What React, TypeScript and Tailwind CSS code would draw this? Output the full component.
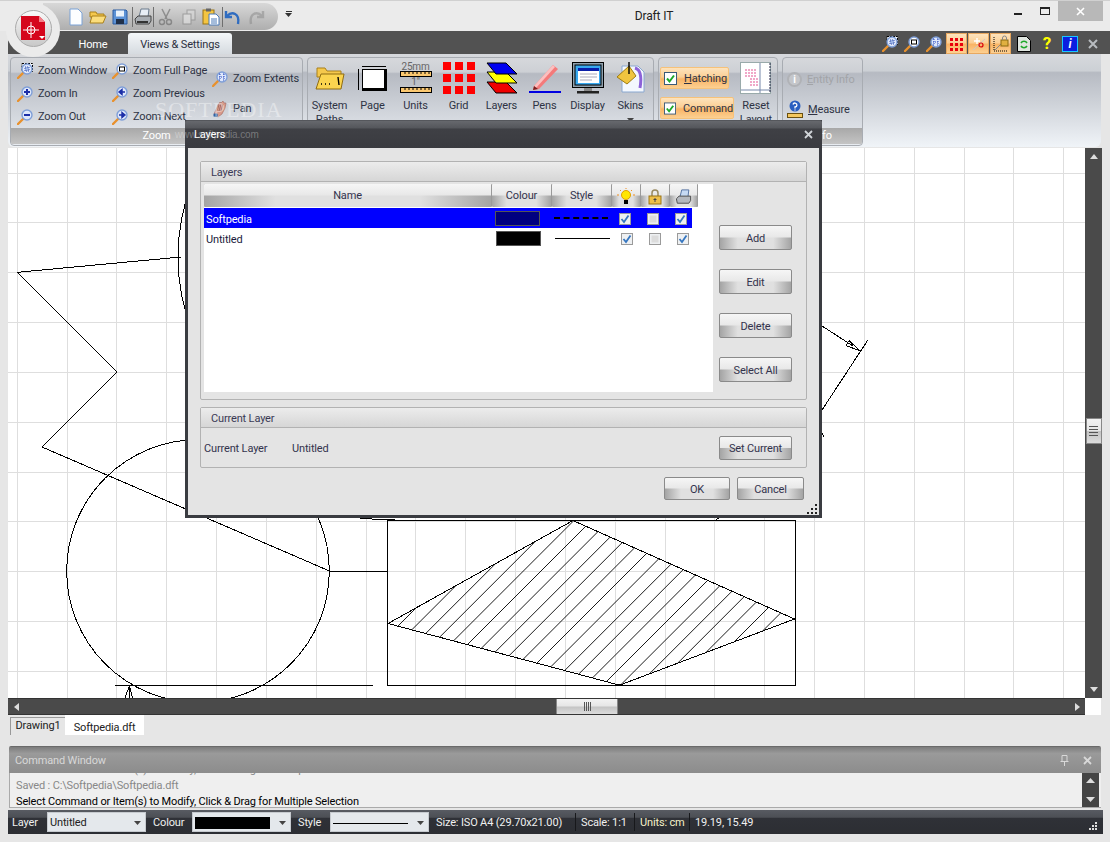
import type { ReactNode } from "react";

// shared backgrounds
const btnBg =
  "bg-[linear-gradient(to_bottom,#f6f6f6,#e8e8e8_48%,transparent_52%),linear-gradient(to_right,#a4a4a4,#e0e0e0_25%,#e0e0e0_75%,#a4a4a4)]";
const orangeBg = "bg-[linear-gradient(to_bottom,#fde3bd,#fbcf95_45%,#f9b465_55%,#fcd092)]";
const groupHeadBg = "bg-[linear-gradient(to_bottom,#ececec,#d6d6d6)]";

function Mag({ kind, size = 16 }: { kind: string; size?: number }) {
  return (
    <svg width={size} height={size} viewBox="0 0 16 16">
      {kind === "window" && <rect x="5" y="0.5" width="10.5" height="8" fill="#fff" stroke="#000" strokeDasharray="2 1" />}
      <line x1="1" y1="15" x2="6" y2="10" stroke="#e8912d" strokeWidth="2.4" strokeLinecap="round" />
      <circle cx="10" cy="6" r="5" fill={kind === "page" ? "#fff" : "#dfe8fb"} stroke="#7f9fd8" strokeWidth="1.4" />
      {kind === "in" && <path d="M7 6h6M10 3v6" stroke="#1c2fa8" strokeWidth="2" />}
      {kind === "out" && <path d="M7 6h6" stroke="#1c2fa8" strokeWidth="2" />}
      {kind === "prev" && <path d="M13 6H9M10 3.5 7 6l3 2.5z" stroke="#1c2fa8" strokeWidth="1.4" fill="#1c2fa8" />}
      {kind === "next" && <path d="M7 6h4M10 3.5 13 6l-3 2.5z" stroke="#1c2fa8" strokeWidth="1.4" fill="#1c2fa8" />}
      {kind === "page" && <rect x="7.5" y="4" width="5" height="4" fill="#fff" stroke="#000" />}
      {kind === "window" && <path d="M8 4h4v4H8z" fill="#9db6e8" stroke="#3a55b0" strokeDasharray="1 1" />}
      {kind === "extents" && <path d="M7 3h2M11 3h2M7 6h6M7 9h2M11 9h2M8 3v6M12 3v6" stroke="#2c4cc0" strokeDasharray="1 1" />}
    </svg>
  );
}

function Pan() {
  return (
    <svg width="16" height="18" viewBox="0 0 16 18">
      <path d="M2 14 6 5l2-3 1 1 2-2 1 2 2 0-1 5-3 6-4 3z" fill="#d99a8c" stroke="#a06a60" strokeWidth="0.6" />
      <path d="M7 5 5 11M9 4 7 11M11 4 9 11" stroke="#8d5a52" strokeWidth="0.7" />
      <rect x="1.5" y="13.5" width="4.5" height="3.5" rx="1" fill="#35609c" />
    </svg>
  );
}

function Caret({ color = "#444" }: { color?: string }) {
  return (
    <svg width="7" height="4" viewBox="0 0 7 4">
      <path d="M0 0h7L3.5 4z" fill={color} />
    </svg>
  );
}

function QatIcon({ name }: { name: string }) {
  const dim = name === "cut" || name === "copy" || name === "redo";
  return (
    <svg width="18" height="18" viewBox="0 0 18 18" className={dim ? "opacity-50" : ""}>
      {name === "new" && <path d="M3 1h8l4 4v12H3z" fill="#fdfeff" stroke="#7ba2d6" />}
      {name === "open" && (
        <>
          <path d="M1 4h6l1 2h7v3H1z" fill="#f5c84c" stroke="#a9801a" />
          <path d="M1 15 3 8h14l-3 7z" fill="#fbdd7c" stroke="#a9801a" />
        </>
      )}
      {name === "save" && (
        <>
          <path d="M2 2h13l1 1v13H2z" fill="#5c92d6" stroke="#2a5ba0" />
          <rect x="5" y="2.5" width="8" height="6" fill="#eaf2fb" />
          <rect x="5" y="11" width="8" height="5" fill="#20304a" />
        </>
      )}
      {name === "print" && (
        <>
          <path d="M5 9 7 1h8l-1 8z" fill="#e8eef6" stroke="#6a7a8c" />
          <path d="M1 11l3-3h13v5l-2 3H2z" fill="#a8adb3" stroke="#444" />
          <path d="M3 14h11" stroke="#333" strokeWidth="2" />
        </>
      )}
      {name === "cut" && (
        <>
          <path d="M5 1l5 10M13 1 8 11" stroke="#555" strokeWidth="1.5" />
          <circle cx="5" cy="14" r="2.5" fill="none" stroke="#555" strokeWidth="1.4" />
          <circle cx="12" cy="14" r="2.5" fill="none" stroke="#555" strokeWidth="1.4" />
        </>
      )}
      {name === "copy" && (
        <>
          <rect x="7" y="2" width="8" height="10" fill="#ddd" stroke="#777" />
          <rect x="3" y="6" width="8" height="10" fill="#eee" stroke="#777" />
        </>
      )}
      {name === "paste" && (
        <>
          <rect x="1" y="2" width="11" height="14" fill="#f4c542" stroke="#9a7414" />
          <rect x="4" y="0.5" width="5" height="3" fill="#666" />
          <path d="M7 6h7l3 3v8H7z" fill="#fff" stroke="#4a7ab8" />
          <path d="M9 11h6M9 13h6M9 15h6" stroke="#4a7ab8" />
        </>
      )}
      {name === "undo" && <path d="M2 3v6h6M3 8c5-5 13-3 11 8" fill="none" stroke="#2f6cc0" strokeWidth="2.4" />}
      {name === "redo" && <path d="M16 3v6h-6M15 8C10 3 2 5 4 16" fill="none" stroke="#888" strokeWidth="2.4" />}
    </svg>
  );
}

function QuickBar() {
  const sep = <span className="mx-[1px] h-[20px] w-px bg-[#6f6f6f]" />;
  return (
    <div className="ml-[43px] mt-[2px] flex h-[27px] w-[235px] items-center rounded-r-[14px] bg-[linear-gradient(to_bottom,#d8d8d8,#aeaeae)] pl-[22px]">
      <div className="flex w-[22px] justify-center"><QatIcon name="new" /></div>
      <div className="flex w-[22px] justify-center"><QatIcon name="open" /></div>
      <div className="flex w-[22px] justify-center"><QatIcon name="save" /></div>
      {sep}
      <div className="flex w-[18px] justify-center"><QatIcon name="print" /></div>
      {sep}
      <div className="flex w-[22px] justify-center"><QatIcon name="cut" /></div>
      <div className="flex w-[24px] justify-center"><QatIcon name="copy" /></div>
      <div className="flex w-[20px] justify-center"><QatIcon name="paste" /></div>
      {sep}
      <div className="flex w-[18px] justify-center"><QatIcon name="undo" /></div>
      <div className="ml-[3px] flex w-[22px] justify-center"><QatIcon name="redo" /></div>
    </div>
  );
}

function TitleBar() {
  return (
    <div className="relative flex h-[31px] items-start border-t border-[#d0d0d0] bg-[#ebebeb]">
      <QuickBar />
      <div className="ml-[7px] mt-[10px] flex flex-col items-center gap-[1px]">
        <span className="h-[1px] w-[6px] bg-[#333]" />
        <Caret color="#333" />
      </div>
      <div className="absolute left-[624px] top-[7px] w-[60px] text-center text-[12px] leading-[16px] text-[#222]">Draft IT</div>
      <div className="ml-auto mr-[7px] flex h-[20px] items-center">
        <span className="mt-[5px] h-[2px] w-[8px] bg-[#222]" />
        <span className="ml-[18px] h-[8px] w-[10px] border border-t-[2px] border-[#222]" />
        <div className="ml-[8px] flex h-[20px] w-[45px] items-center justify-center bg-[#b8b8b8]">
          <svg width="9" height="9" viewBox="0 0 9 9">
            <path d="M1 1l7 7M8 1 1 8" stroke="#fff" strokeWidth="1.6" />
          </svg>
        </div>
      </div>
    </div>
  );
}

function Logo() {
  return (
    <div className="absolute left-[6px] top-[3px] flex h-[54px] w-[54px] items-center justify-center rounded-full bg-[#ebebeb] pb-[4px]">
      <div className="flex h-[37px] w-[37px] items-center justify-center rounded-full border border-[#aaa] bg-[linear-gradient(to_bottom,#fafafa,#c8c8c8)]">
        <svg width="25" height="25" viewBox="0 0 25 25">
          <path d="M0 0h18l6 6v18H0z" fill="#d5061c" />
          <path d="M18 0l6 6h-6z" fill="#f37f87" />
          <circle cx="10" cy="14" r="4" fill="none" stroke="#fff" />
          <path d="M2 14h16M10 6v16" stroke="#fff" />
          <path d="M18 20h6l-3 3z" fill="#fff" />
        </svg>
      </div>
    </div>
  );
}

function RightTools() {
  const onCell = `flex h-[21px] w-[21px] items-center justify-center border border-[#e8a860] ${orangeBg}`;
  return (
    <div className="ml-auto mr-[11px] flex items-center">
      <div className="flex w-[22px] justify-center"><Mag kind="window" /></div>
      <div className="flex w-[22px] justify-center"><Mag kind="page" /></div>
      <div className="mr-[1px] flex w-[22px] justify-center"><Mag kind="extents" /></div>
      <div className={onCell}>
        <svg width="14" height="14" viewBox="0 0 14 14">
          <path d="M0 1h3v3H0zM5 1h3v3H5zM10 1h3v3h-3zM0 6h3v3H0zM5 6h3v3H5zM10 6h3v3h-3zM0 11h3v3H0zM5 11h3v3H5zM10 11h3v3h-3z" fill="#e9000c" />
        </svg>
      </div>
      <div className={`ml-[1px] ${onCell}`}>
        <svg width="14" height="14" viewBox="0 0 14 14">
          <path d="M1 13 13 2" stroke="#c9c9c9" />
          <path d="M5 1v6M2 4h6" stroke="#fff" strokeWidth="1.4" />
          <circle cx="9" cy="8" r="2" fill="none" stroke="#d8000c" strokeWidth="1.2" />
        </svg>
      </div>
      <div className={`ml-[1px] ${onCell}`}>
        <svg width="18" height="18" viewBox="0 0 18 18">
          <path d="M2 2v14h14" fill="none" stroke="#000" strokeDasharray="1 1" />
          <path d="M3 15 10 8" stroke="#888" />
          <rect x="9" y="5" width="7" height="6" fill="#e0b040" stroke="#8a6a10" />
          <path d="M10.5 5V3a2 2 0 0 1 4 0v2" fill="none" stroke="#888" />
        </svg>
      </div>
      <div className="ml-[2px] flex w-[22px] justify-center">
        <svg width="14" height="16" viewBox="0 0 14 16">
          <path d="M0.5 0.5h9l4 4v11H.5z" fill="#dfe5df" stroke="#000" />
          <path d="M4 7a3.5 3.5 0 0 1 6 0M10 10a3.5 3.5 0 0 1-6 0" fill="none" stroke="#1fa82a" strokeWidth="1.6" />
        </svg>
      </div>
      <div className="ml-[1px] flex w-[22px] justify-center text-[17px] font-bold leading-none text-[#ffff00]">?</div>
      <div className="ml-[1px] flex w-[22px] justify-center">
        <div className="flex h-[16px] w-[16px] items-center justify-center border border-[#19c7ff] bg-[#0a1ee0] text-[12px] font-bold italic leading-none text-white">i</div>
      </div>
      <svg width="10" height="10" viewBox="0 0 10 10" className="ml-[7px] mr-[1px]">
        <path d="M1 1l8 8M9 1 1 9" stroke="#b8bcc0" strokeWidth="2" />
      </svg>
    </div>
  );
}

function TabBand() {
  return (
    <div className="ml-[8px] flex h-[23px] items-end bg-[#525252]">
      <div className="ml-[56px] flex h-[21px] w-[64px] items-center justify-center pr-[6px] pt-[4px] text-white">Home</div>
      <div className="flex h-[21px] w-[104px] items-center justify-center rounded-t-[3px] bg-[linear-gradient(to_bottom,#f4f7f9,#d6dbe0)] pt-[4px] text-[#2c3040]">Views &amp; Settings</div>
      <RightTools />
    </div>
  );
}

function Group({ className, label, children }: { className: string; label: string; children: ReactNode }) {
  return (
    <div className={`relative h-[89px] overflow-hidden rounded-[4px] border border-[#a8acb2] bg-[linear-gradient(to_bottom,#d6d8dc,#cdd0d5_16%,#b6bac2_18%,#e8ecf1_100%)] ${className}`}>
      {children}
      <div className="absolute inset-x-0 bottom-[1px] flex h-[16px] items-center justify-center bg-[linear-gradient(to_bottom,#a8a8a8,#c4c4c4)] text-white">{label}</div>
    </div>
  );
}

function SmallBtn({ icon, label }: { icon: ReactNode; label: string }) {
  return (
    <div className="flex h-[23px] items-center gap-[5px] whitespace-nowrap">
      <span className="flex w-[16px] justify-center">{icon}</span>
      <span className="pt-[2px]">{label}</span>
    </div>
  );
}

function Big({ icon, lines, more }: { icon: ReactNode; lines: string[]; more?: boolean }) {
  return (
    <div className="flex w-[43px] flex-col items-center leading-[14px]">
      <div className="flex h-[32px] items-center justify-center">{icon}</div>
      <div className="mt-[5px] whitespace-nowrap text-center">
        {lines.map((l) => (
          <div key={l}>{l}</div>
        ))}
        {more && (
          <div className="flex h-[14px] justify-center pt-[5px]">
            <Caret />
          </div>
        )}
      </div>
    </div>
  );
}

function FolderBig() {
  return (
    <svg width="30" height="24" viewBox="0 0 30 24">
      <path d="M2 2h8l2 3h14v6H2z" fill="#f5c84c" stroke="#a9801a" />
      <path d="M1 23 6 8h23l-3 15z" fill="#fbd44f" stroke="#8f6c12" />
      <path d="M6 18h1M10 18h1M14 18h1M23 11l1 8" stroke="#000" strokeWidth="1.4" />
    </svg>
  );
}

function PageBig() {
  return (
    <svg width="30" height="25" viewBox="0 0 30 25">
      <path d="M4 0.5h24M0.5 3v21" stroke="#000" />
      <rect x="4" y="3" width="25" height="22" fill="#000" />
      <rect x="4.5" y="3.5" width="22" height="19" fill="#fff" stroke="#000" />
    </svg>
  );
}

function Ruler() {
  return (
    <svg width="32" height="6" viewBox="0 0 32 6" className="block">
      <rect x="0.5" y="0.5" width="31" height="5" fill="#fbc870" stroke="#000" />
      <path d="M5 1v2M9 1v2M13 1v2M17 1v2M21 1v2M25 1v2M29 1v2" stroke="#000" />
    </svg>
  );
}

function UnitsBig() {
  return (
    <div className="flex h-[31px] w-[32px] flex-col items-center text-[10px] leading-[8px] text-[#666]">
      <span>25mm</span>
      <Ruler />
      <span className="mt-[1px] h-[9px]">1"</span>
      <Ruler />
    </div>
  );
}

function GridBig() {
  return (
    <div className="grid grid-cols-3 gap-[4px]">
      {Array.from({ length: 9 }).map((_, i) => (
        <span key={i} className="h-[8px] w-[8px] bg-[#ff0000]" />
      ))}
    </div>
  );
}

function LayersBig() {
  return (
    <svg width="32" height="32" viewBox="0 0 32 32">
      <path d="M1 20h19l11 11H10z" fill="#f00000" stroke="#000" />
      <path d="M1 10h19l11 11H10z" fill="#ffff00" stroke="#000" />
      <path d="M1 1h19l11 11H10z" fill="#0000f0" stroke="#000" />
    </svg>
  );
}

function PensBig() {
  return (
    <svg width="32" height="32" viewBox="0 0 32 32">
      <path d="M5 24 24 3l5 4-19 20-6 1z" fill="#f47a7a" />
      <path d="M5 24 24 3l2 2L7 26z" fill="#fbc0c0" />
      <path d="M4 28l1-4 4 3z" fill="#7a2020" />
      <rect x="0" y="29" width="32" height="2" fill="#0000e0" />
    </svg>
  );
}

function DisplayBig() {
  return (
    <svg width="32" height="32" viewBox="0 0 32 32">
      <rect x="0.5" y="0.5" width="31" height="25" fill="#8fa1ae" stroke="#000" />
      <rect x="3" y="3" width="26" height="20" fill="#38a8ef" stroke="#000" />
      <rect x="6" y="6" width="21" height="15" fill="#fff" />
      <rect x="6" y="6" width="21" height="3" fill="#0a1ea8" />
      <path d="M8 12h17M8 15h17M8 18h12" stroke="#aab" />
      <rect x="12" y="26" width="8" height="3" fill="#888" />
      <rect x="5" y="29" width="22" height="2.5" fill="#222" />
    </svg>
  );
}

function SkinsBig() {
  return (
    <svg width="30" height="32" viewBox="0 0 30 32">
      <path d="M6 4h16l6 6v20H6z" fill="#f4f8fe" stroke="#8aa8d0" />
      <path d="M1 15 13 4l7 10-9 8z" fill="#f0c53f" stroke="#a07c10" />
      <path d="M13 0v12" stroke="#000" strokeWidth="1.4" />
      <path d="M19 6c7 2 6 14 5 20" fill="none" stroke="#8c62d8" strokeWidth="3" />
    </svg>
  );
}

function ResetBig() {
  return (
    <svg width="31" height="32" viewBox="0 0 31 32">
      <rect x="0.5" y="0.5" width="30" height="31" fill="#fff" stroke="#9aa" />
      <path d="M20 1v30M1 28h29" stroke="#7788aa" />
      <path d="M30 1v30" stroke="#224" strokeDasharray="2 1" />
      <path d="M5 8h12M5 11h12M5 14h12M10 17h8M10 20h8M10 23h8" stroke="#f0a8c8" strokeWidth="2" strokeDasharray="2 1" />
    </svg>
  );
}

function CheckToggle({ label, underline, className }: { label: string; underline?: boolean; className: string }) {
  return (
    <div className={`flex h-[22px] items-center rounded-[2px] border border-[#f6c27a] pl-[3px] ${orangeBg} ${className}`}>
      <svg width="13" height="13" viewBox="0 0 13 13">
        <rect x="0.5" y="0.5" width="12" height="12" fill="#fff" stroke="#3c5a78" />
        <path d="M3 6.5l2.5 3 4.5-6" fill="none" stroke="#1ea82a" strokeWidth="2" />
      </svg>
      <span className="ml-[7px] whitespace-nowrap pt-[2px]">
        {underline ? <u>H</u> : null}
        {label}
      </span>
    </div>
  );
}

function Ribbon() {
  return (
    <div className="ml-[8px] flex h-[93px] w-[1093px] gap-[4px] rounded-b-[6px] bg-[linear-gradient(to_bottom,#d7d9dd,#ccd0d5_18%,#b6bac2_20%,#f0f4f8_100%)] pl-[2px] pt-[3px] text-[#2e3344]">
      <Group className="w-[293px]" label="Zoom">
        <div className="flex pl-[6px] pt-[1px]">
          <div className="w-[95px]">
            <SmallBtn icon={<Mag kind="window" />} label="Zoom Window" />
            <SmallBtn icon={<Mag kind="in" />} label="Zoom In" />
            <SmallBtn icon={<Mag kind="out" />} label="Zoom Out" />
          </div>
          <div className="w-[100px]">
            <SmallBtn icon={<Mag kind="page" />} label="Zoom Full Page" />
            <SmallBtn icon={<Mag kind="prev" />} label="Zoom Previous" />
            <SmallBtn icon={<Mag kind="next" />} label="Zoom Next" />
          </div>
          <div className="pt-[8px]">
            <SmallBtn icon={<Mag kind="extents" />} label="Zoom Extents" />
            <div className="mt-[7px]">
              <SmallBtn icon={<Pan />} label="Pan" />
            </div>
          </div>
        </div>
      </Group>
      <Group className="w-[347px]" label="Settings">
        <div className="flex pt-[4px]">
          <Big icon={<FolderBig />} lines={["System", "Paths"]} />
          <Big icon={<PageBig />} lines={["Page"]} />
          <Big icon={<UnitsBig />} lines={["Units"]} />
          <Big icon={<GridBig />} lines={["Grid"]} />
          <Big icon={<LayersBig />} lines={["Layers"]} />
          <Big icon={<PensBig />} lines={["Pens"]} />
          <Big icon={<DisplayBig />} lines={["Display"]} />
          <Big icon={<SkinsBig />} lines={["Skins"]} more />
        </div>
      </Group>
      <Group className="w-[120px]" label="Layout">
        <div className="flex pl-[1px] pt-[4px]">
          <div className="flex w-[76px] flex-col gap-[8px] pt-[5px]">
            <CheckToggle className="w-[69px]" label="atching" underline />
            <CheckToggle className="w-[74px]" label="Command" />
          </div>
          <Big icon={<ResetBig />} lines={["Reset", "Layout"]} />
        </div>
      </Group>
      <Group className="w-[81px]" label="Info">
        <div className="flex flex-col pl-[4px] pt-[9px]">
          <div className="flex h-[24px] items-center gap-[5px] whitespace-nowrap text-[#a2a4a8]">
            <span className="flex h-[15px] w-[15px] items-center justify-center rounded-full border-2 border-[#b0b2b6] bg-[#c4c6ca] text-[10px] font-bold text-white">i</span>
            <span className="pt-[2px]"><u>E</u>ntity Info</span>
          </div>
          <div className="mt-[6px] flex h-[24px] items-center gap-[5px] whitespace-nowrap">
            <svg width="16" height="18" viewBox="0 0 16 18">
              <circle cx="8" cy="6" r="5.5" fill="#2a5fc0" />
              <path d="M6 4.5a2 2 0 1 1 2 2.5v1.5M8 9.5v1" fill="none" stroke="#fff" strokeWidth="1.3" />
              <rect x="0.5" y="13.5" width="15" height="4" fill="#f4c860" stroke="#6a5010" />
            </svg>
            <span className="pt-[2px]"><u>M</u>easure</span>
          </div>
        </div>
      </Group>
    </div>
  );
}

const GRID_X = Array.from({ length: 22 }, (_, i) => 17.3 + i * 49.83);
const GRID_Y = Array.from({ length: 11 }, (_, i) => 173 + i * 49.85);
const HATCH = Array.from({ length: 22 }, (_, i) => 1024 + i * 17.6);
const DIAMOND = "388,623.5 573,520.5 794.5,619 620,685 617,684.5";

function Drawing() {
  return (
    <svg width="1077" height="550" viewBox="8 148 1077 550" className="block bg-white" shapeRendering="crispEdges">
      <defs>
        <clipPath id="diamond">
          <polygon points={DIAMOND} />
        </clipPath>
      </defs>
      <g stroke="#dedede">
        {GRID_X.map((x) => (
          <line key={x} x1={x} y1="148" x2={x} y2="698" />
        ))}
        {GRID_Y.map((y) => (
          <line key={y} x1="8" y1={y} x2="1085" y2={y} />
        ))}
      </g>
      <g fill="none" stroke="#000" strokeWidth="1">
        <circle cx="381" cy="257" r="203" />
        <circle cx="198" cy="571" r="131.3" />
        <polyline points="181,257 17.5,272.3 117.3,372 42,447 329.5,571 387.5,571" />
        <rect x="387.5" y="520.5" width="408" height="165" />
        <polygon points={DIAMOND} />
        <g clipPath="url(#diamond)" shapeRendering="auto" strokeWidth="0.9">
          {HATCH.map((c) => (
            <line key={c} x1={c - 700} y1="700" x2={c - 500} y2="500" />
          ))}
        </g>
        <path d="M115 685.5H373" />
        <path d="M129.3 686 125 698M129.3 686 132.7 698M129.3 686V698" />
        <path d="M822 326 853 346" />
        <path d="M849 340.7 860 350.7 846 345.7z" />
        <path d="M867.7 340.3 822 410M822 433 824 437" />
        <path d="M360 518.5 395 520M716 520 720 517" />
      </g>
    </svg>
  );
}

function VScroll() {
  return (
    <div className="flex h-[550px] w-[17px] flex-col items-center bg-[#4a4a4a]">
      <div className="flex h-[17px] items-center">
        <svg width="8" height="5" viewBox="0 0 8 5"><path d="M4 0l4 5H0z" fill="#ddd" /></svg>
      </div>
      <div className="mt-[253px] flex h-[26px] w-[16px] flex-col items-center justify-center gap-[2px] border border-[#888] bg-[linear-gradient(to_bottom,#f2f2f2,#e6e6e6_48%,#c4c4c4_52%,#dcdcdc)]">
        <span className="h-px w-[9px] bg-[#555]" />
        <span className="h-px w-[9px] bg-[#555]" />
        <span className="h-px w-[9px] bg-[#555]" />
        <span className="h-px w-[9px] bg-[#555]" />
      </div>
      <div className="mt-auto flex h-[17px] items-center">
        <svg width="8" height="5" viewBox="0 0 8 5"><path d="M0 0h8L4 5z" fill="#ddd" /></svg>
      </div>
    </div>
  );
}

function HScroll() {
  return (
    <div className="ml-[8px] flex h-[17px] w-[1093px]">
      <div className="flex h-[17px] w-[1077px] items-center border-y border-[#333] bg-[#4a4a4a]">
        <div className="flex w-[17px] justify-center">
          <svg width="5" height="8" viewBox="0 0 5 8"><path d="M5 0v8L0 4z" fill="#ddd" /></svg>
        </div>
        <div className="ml-[531px] flex h-[15px] w-[62px] items-center justify-center gap-[1px] border-x border-[#888] bg-[linear-gradient(to_bottom,#f2f2f2,#e6e6e6_48%,#c4c4c4_52%,#dcdcdc)]">
          <span className="h-[9px] w-px bg-[#555]" />
          <span className="h-[9px] w-px bg-[#555]" />
          <span className="h-[9px] w-px bg-[#555]" />
          <span className="h-[9px] w-px bg-[#555]" />
        </div>
        <div className="ml-auto mr-[2px] flex w-[12px] justify-center">
          <svg width="5" height="8" viewBox="0 0 5 8"><path d="M0 0v8l5-4z" fill="#ddd" /></svg>
        </div>
      </div>
      <div className="flex-1 bg-white" />
    </div>
  );
}

function DocTabs() {
  return (
    <div className="ml-[10px] flex h-[22px] text-[#222]">
      <div className="mt-[2px] flex h-[18px] w-[55px] items-center justify-center border-l border-t border-[#999]">Drawing1</div>
      <div className="flex h-[20px] w-[79px] items-center justify-center bg-white pt-[7px]">Softpedia.dft</div>
    </div>
  );
}

function CommandWindow() {
  return (
    <div className="ml-[9px] mt-[9px] w-[1092px] overflow-hidden rounded-t-[2px]">
      <div className="flex h-[27px] items-center border-t border-[#6a6a6a] bg-[linear-gradient(to_bottom,#7c7c7c,#9a9a9a_25%,#8c8c8c)] pl-[6px] text-[#d8d8d8]">
        <span className="pt-[2px]">Command Window</span>
        <svg width="9" height="11" viewBox="0 0 9 11" className="ml-auto">
          <path d="M2 0.5h5v6H2zM0.5 6.5h8M4.5 7v4" fill="none" stroke="#d8d8d8" />
        </svg>
        <svg width="9" height="9" viewBox="0 0 9 9" className="ml-[14px] mr-[9px]">
          <path d="M1 1l7 7M8 1 1 8" stroke="#d8d8d8" strokeWidth="1.8" />
        </svg>
      </div>
      <div className="flex h-[35px] border-b border-[#aaa] border-l bg-[#efefef]">
        <div className="flex h-[34px] flex-1 flex-col justify-end overflow-hidden pl-[6px] leading-[16px] text-black">
          <div className="shrink-0 text-[#888]">Select Command or Item(s) to Modify, Click &amp; Drag for Multiple Selection</div>
          <div className="shrink-0 text-[#888]">Saved : C:\Softpedia\Softpedia.dft</div>
          <div className="-mb-[3px] shrink-0">Select Command or Item(s) to Modify, Click &amp; Drag for Multiple Selection</div>
        </div>
        <div className="mr-[2px] flex w-[17px] flex-col items-center justify-between bg-[#444] py-[5px]">
          <svg width="9" height="5" viewBox="0 0 9 5"><path d="M4.5 0 9 5H0z" fill="#ddd" /></svg>
          <svg width="9" height="5" viewBox="0 0 9 5"><path d="M0 0h9L4.5 5z" fill="#ddd" /></svg>
        </div>
      </div>
    </div>
  );
}

function StatusSelect({ children }: { children: ReactNode }) {
  return (
    <div className="flex h-[20px] w-[99px] items-center justify-between border border-[#c6cacf] bg-[#e4e8ec] pl-[2px] pr-[4px] pt-[2px] text-[#222]">
      {children}
      <Caret />
    </div>
  );
}

function StatusBar() {
  return (
    <div className="ml-[8px] mt-[2px] flex h-[24px] w-[1095px] items-center whitespace-nowrap bg-[linear-gradient(to_bottom,#585b62,#4c4f55_30%,#2f3137_35%,#2c2e33)] text-[#f0f0f0]">
      <span className="ml-[4px] w-[35px] pt-[2px]">Layer</span>
      <StatusSelect>Untitled</StatusSelect>
      <span className="ml-[7px] w-[39px] pt-[2px]">Colour</span>
      <StatusSelect>
        <span className="h-[12px] w-[75px] bg-black" />
      </StatusSelect>
      <span className="ml-[7px] w-[32px] pt-[2px]">Style</span>
      <StatusSelect>
        <span className="h-px w-[75px] bg-black" />
      </StatusSelect>
      <span className="ml-[7px] w-[139px] pt-[2px]">Size: ISO A4 (29.70x21.00)</span>
      <span className="h-[18px] w-px bg-[#17181b]" />
      <span className="ml-[5px] w-[53px] pt-[2px]">Scale: 1:1</span>
      <span className="h-[18px] w-px bg-[#17181b]" />
      <span className="ml-[5px] w-[49px] pt-[2px] text-[#f6f2c8]">Units: cm</span>
      <span className="h-[18px] w-px bg-[#17181b]" />
      <span className="ml-[5px] pt-[2px]">19.19, 15.49</span>
      <svg width="9" height="9" viewBox="0 0 9 9" className="ml-auto mr-[5px] mt-[8px]">
        <path d="M6 0h2v2H6zM3 3h2v2H3zM6 3h2v2H6zM0 6h2v2H0zM3 6h2v2H3zM6 6h2v2H6z" fill="#ddd" />
      </svg>
    </div>
  );
}

function DlgButton({ children, className }: { children: ReactNode; className: string }) {
  return (
    <div className={`flex items-center justify-center rounded-[2px] border border-[#8a8a8a] pt-[3px] text-[#33334d] ${btnBg} ${className}`}>
      {children}
    </div>
  );
}

function Check({ on }: { on: boolean }) {
  return (
    <svg width="12" height="12" viewBox="0 0 12 12" className="shrink-0">
      <rect x="0.5" y="0.5" width="11" height="11" fill="#eef0f2" stroke="#9a9a9a" />
      {on ? <path d="M2.5 6l2.5 3 4.5-6.5" fill="none" stroke="#3576c0" strokeWidth="1.8" /> : <rect x="2.5" y="2.5" width="7" height="7" fill="#dcdcdc" />}
    </svg>
  );
}

function HeadCell({ className, children }: { className: string; children: ReactNode }) {
  return (
    <div className={`flex h-[23px] items-center justify-center rounded-[1px] border-r border-[#9a9a9a] pt-[2px] text-[#33334d] ${btnBg} ${className}`}>
      {children}
    </div>
  );
}

function Checks() {
  return (
    <>
      <span className="ml-[11px] mt-[2px] flex"><Check on /></span>
      <span className="ml-[16px] mt-[2px] flex"><Check on={false} /></span>
      <span className="ml-[16px] mt-[2px] flex"><Check on /></span>
    </>
  );
}

function LayerTable() {
  return (
    <div className="h-[208px] w-[509px] bg-white">
      <div className="flex">
        <HeadCell className="w-[288px]">Name</HeadCell>
        <HeadCell className="w-[60px]">Colour</HeadCell>
        <HeadCell className="w-[60px]">Style</HeadCell>
        <HeadCell className="w-[29px]">
          <svg width="18" height="18" viewBox="0 0 18 18">
            <circle cx="9" cy="7" r="4.5" fill="#ffe600" stroke="#e0a000" />
            <rect x="7" y="12" width="4" height="4" fill="#000" />
            <path d="M9 0v1M2 7h-2M16 7h2M3 2l1 1M15 2l-1 1" stroke="#f09020" />
          </svg>
        </HeadCell>
        <HeadCell className="w-[29px]">
          <svg width="14" height="16" viewBox="0 0 14 16">
            <path d="M4 7V4a3 3 0 0 1 6 0v3" fill="none" stroke="#9a8a60" strokeWidth="1.5" />
            <rect x="1" y="7" width="12" height="8" fill="#efc04a" stroke="#9a7414" />
            <path d="M7 9v4M5.5 10.5h3" stroke="#444" />
          </svg>
        </HeadCell>
        <HeadCell className="w-[28px]">
          <svg width="17" height="16" viewBox="0 0 18 18">
            <path d="M5 9 7 1h8l-1 8z" fill="#c6daf4" stroke="#4a6a9c" />
            <path d="M1 11l3-3h13v5l-2 3H2z" fill="#b4b8be" stroke="#444" />
          </svg>
        </HeadCell>
      </div>
      <div className="mt-px flex h-[20px] w-[488px] items-center bg-[#0000ff] text-white">
        <span className="w-[291px] pl-[2px] pt-[4px]">Softpedia</span>
        <span className="h-[15px] w-[45px] border border-[#555] bg-[#000080]" />
        <span className="ml-[14px] h-0 w-[54px] border-t-2 border-dashed border-black" />
        <Checks />
      </div>
      <div className="flex h-[20px] w-[488px] items-center text-[#1c1c3c]">
        <span className="w-[292px] pl-[2px] pt-[4px]">Untitled</span>
        <span className="h-[15px] w-[45px] border border-[#555] bg-black" />
        <span className="ml-[14px] h-px w-[55px] bg-black" />
        <Checks />
      </div>
    </div>
  );
}

function DialogGroup({ title, className, children }: { title: string; className: string; children: ReactNode }) {
  return (
    <div className={`mx-[12px] w-[607px] rounded-[2px] border border-[#b2b2b2] ${className}`}>
      <div className={`flex h-[20px] items-center border-b border-[#b2b2b2] pl-[10px] pt-[4px] text-[#3a3a55] ${groupHeadBg}`}>{title}</div>
      {children}
    </div>
  );
}

function LayersDialog() {
  return (
    <div className="absolute left-[185px] top-[120px] flex h-[398px] w-[637px] flex-col border-x-[3px] border-b-[3px] border-[#3a3c41]">
      <div className="-mx-[3px] flex h-[28px] shrink-0 items-center rounded-t-[2px] border-t border-[#55575c] bg-[linear-gradient(to_bottom,#66686d,#55575c_25%,#3f4045_30%,#3a3b40)] pl-[9px] pr-[9px] text-white">
        <span className="pt-[2px]">Layers</span>
        <svg width="9" height="9" viewBox="0 0 9 9" className="ml-auto">
          <path d="M1 1l7 7M8 1 1 8" stroke="#d0d4d8" strokeWidth="1.8" />
        </svg>
      </div>
      <div className="relative flex-1 bg-[#e4e4e4] pt-[13px]">
        <DialogGroup title="Layers" className="h-[239px]">
          <div className="flex pl-[3px] pt-[2px]">
            <LayerTable />
            <div className="ml-[6px] flex w-[73px] flex-col gap-[19px] pt-[41px]">
              <DlgButton className="h-[25px]">Add</DlgButton>
              <DlgButton className="h-[25px]">Edit</DlgButton>
              <DlgButton className="h-[25px]">Delete</DlgButton>
              <DlgButton className="h-[25px]">Select All</DlgButton>
            </div>
          </div>
        </DialogGroup>
        <DialogGroup title="Current Layer" className="mt-[7px] h-[61px]">
          <div className="flex h-[39px] items-center pl-[3px] text-[#33334d]">
            <span className="w-[88px] pt-[4px]">Current Layer</span>
            <span className="pt-[4px]">Untitled</span>
            <DlgButton className="ml-auto mr-[14px] h-[24px] w-[73px]">Set Current</DlgButton>
          </div>
        </DialogGroup>
        <div className="mr-[15px] mt-[9px] flex justify-end gap-[7px]">
          <DlgButton className="h-[23px] w-[66px]">OK</DlgButton>
          <DlgButton className="h-[23px] w-[67px]">Cancel</DlgButton>
        </div>
        <svg width="11" height="11" viewBox="0 0 11 11" className="absolute bottom-[0px] right-[1px]">
          <path d="M8 0h2v2H8zM4 4h2v2H4zM8 4h2v2H8zM0 8h2v2H0zM4 8h2v2H4zM8 8h2v2H8z" fill="#222" />
        </svg>
      </div>
    </div>
  );
}

export default function App() {
  return (
    <div className="relative h-[842px] w-[1110px] overflow-hidden bg-[#e6e6e6] font-['Roboto',sans-serif] text-[11px] tracking-[-0.15px]">
      <TitleBar />
      <TabBand />
      <Ribbon />
      <div className="ml-[8px] mt-[1px] flex w-[1094px]">
        <Drawing />
        <VScroll />
      </div>
      <HScroll />
      <DocTabs />
      <CommandWindow />
      <StatusBar />
      <Logo />
      <div className="absolute left-[155px] top-[98px] font-['Liberation_Serif',serif] text-[22px] leading-[24px] tracking-[1px] text-white/40">SOFTPEDIA</div>
      <LayersDialog />
      <div className="absolute left-[175px] top-[127px] font-['Liberation_Sans',sans-serif] text-[10px] leading-[16px] text-white/30">www.softpedia.com</div>
    </div>
  );
}
